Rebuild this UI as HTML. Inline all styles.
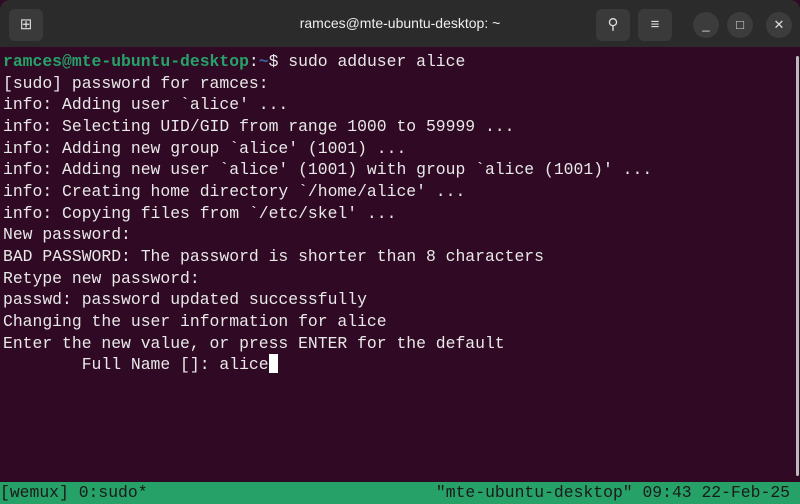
<!DOCTYPE html><html><head><style>
body{margin:0;width:800px;height:504px;overflow:hidden;background:#300a24;font-family:"Liberation Mono",monospace}
.tb{position:absolute;left:0;top:0;width:800px;height:47px;background:#2b2b2b;border-radius:10px 10px 0 0}
.btn{position:absolute;top:9px;width:34px;height:32px;background:#3a3a3a;border-radius:6px;color:#ddd;text-align:center;line-height:32px;font-family:"Liberation Sans";font-size:15px}
.c{position:absolute;top:12px;width:26px;height:26px;border-radius:13px;background:#3c3c3c;color:#ddd;text-align:center;line-height:26px;font-family:"Liberation Sans";font-size:13px}
.title{position:absolute;top:15px;left:0;width:800px;text-align:center;color:#eee;font-family:"Liberation Sans";font-size:14px}
pre{position:absolute;left:3px;top:51px;margin:0;color:#e8e8e8;font-family:"Liberation Mono",monospace;font-size:16.4px;line-height:21.65px}
.g{color:#26a269;font-weight:bold}.b{color:#3465a4;font-weight:bold}
.cur{background:#fff;display:inline-block;width:9px;height:19px;vertical-align:-4px}
.st{position:absolute;left:0;top:482px;width:800px;height:22px;background:#26a269;color:#1a1a1a;font-size:16.4px;line-height:22px;white-space:pre}
.sb{position:absolute;right:1px;top:56px;width:3px;height:420px;background:#bbb;border-radius:2px}
</style></head><body>
<div class="tb"><div class="btn" style="left:9px">⊞</div><div class="title">ramces@mte-ubuntu-desktop: ~</div>
<div class="btn" style="left:596px">&#9906;</div><div class="btn" style="left:638px">≡</div>
<div class="c" style="left:693px">_</div><div class="c" style="left:727px">□</div><div class="c" style="left:766px">✕</div></div>
<pre><span class="g">ramces@mte-ubuntu-desktop</span>:<span class="b">~</span>$ sudo adduser alice
[sudo] password for ramces:
info: Adding user `alice' ...
info: Selecting UID/GID from range 1000 to 59999 ...
info: Adding new group `alice' (1001) ...
info: Adding new user `alice' (1001) with group `alice (1001)' ...
info: Creating home directory `/home/alice' ...
info: Copying files from `/etc/skel' ...
New password:
BAD PASSWORD: The password is shorter than 8 characters
Retype new password:
passwd: password updated successfully
Changing the user information for alice
Enter the new value, or press ENTER for the default
        Full Name []: alice<span class="cur"></span></pre>
<div class="sb"></div>
<div class="st">[wemux] 0:sudo*<span style="position:absolute;right:10px">"mte-ubuntu-desktop" 09:43 22-Feb-25</span></div>
</body></html>
